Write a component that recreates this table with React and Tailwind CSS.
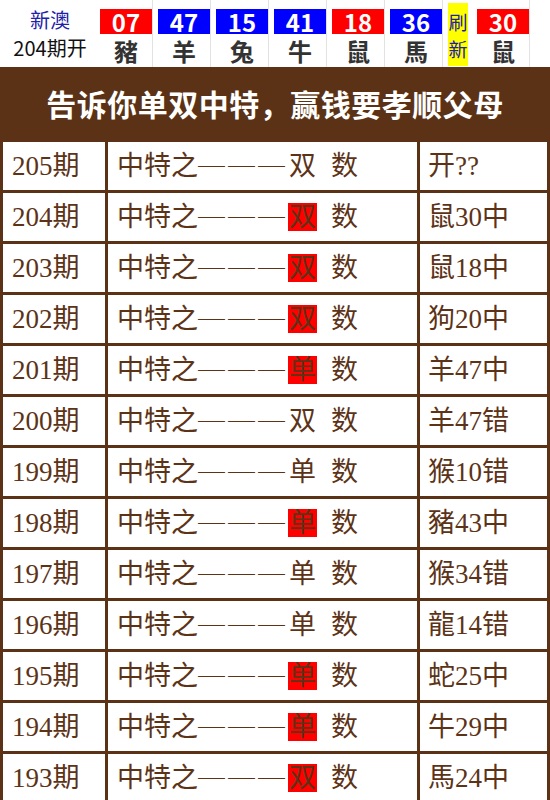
const balls = [
  { n: '07', z: '豬', c: 'bg-[#ff0000]' },
  { n: '47', z: '羊', c: 'bg-[#0000ff]' },
  { n: '15', z: '兔', c: 'bg-[#0000ff]' },
  { n: '41', z: '牛', c: 'bg-[#0000ff]' },
  { n: '18', z: '鼠', c: 'bg-[#ff0000]' },
  { n: '36', z: '馬', c: 'bg-[#0000ff]' },
];

const rows = [
  ['205期', '双', false, '开??'],
  ['204期', '双', true, '鼠30中'],
  ['203期', '双', true, '鼠18中'],
  ['202期', '双', true, '狗20中'],
  ['201期', '单', true, '羊47中'],
  ['200期', '双', false, '羊47错'],
  ['199期', '单', false, '猴10错'],
  ['198期', '单', true, '豬43中'],
  ['197期', '单', false, '猴34错'],
  ['196期', '单', false, '龍14错'],
  ['195期', '单', true, '蛇25中'],
  ['194期', '单', true, '牛29中'],
  ['193期', '双', true, '馬24中'],
];

const sans = "font-['Noto_Sans_CJK_SC',sans-serif]";
const serif = "font-['Liberation_Serif','Noto_Sans_CJK_SC',serif]";

function Ball({ n, z, c }) {
  return (
    <div className="flex h-[67px] w-[58px] flex-col">
      <div className="flex h-full w-[53px] flex-col border-r border-[#e2e2e2]">
        <div className={`mt-[9px] flex h-[25px] items-center justify-center text-[24px] font-bold leading-[25px] text-white ${c}`}>{n}</div>
        <div className="mt-[4px] text-center text-[24px] font-bold leading-[26px] text-[#333]">{z}</div>
      </div>
    </div>
  );
}

export default function App() {
  return (
    <div className={`w-[550px] bg-white ${sans}`}>
      <div className="flex h-[67px] items-stretch">
        <div className="flex w-[100px] flex-col items-center pt-[8px]">
          <span className="text-[20px] leading-[24px] text-[#2121a8]">新澳</span>
          <span className="mt-[4px] text-[20px] leading-[24px] text-[#111]">204期开</span>
        </div>
        {balls.map((b) => (
          <Ball key={b.n} {...b} />
        ))}
        <div className="w-[29px] pt-[3px]">
          <div className="flex h-[63px] w-[20px] flex-col items-center justify-center bg-[#ffff00] text-[19px] leading-[27px] text-[#2121a8]">
            <span>刷</span>
            <span>新</span>
          </div>
        </div>
        <Ball n="30" z="鼠" c="bg-[#ff0000]" />
      </div>

      <div className="bg-[#5b3216]">
        <div className="flex h-[72px] items-center justify-center text-[30px] font-bold tracking-[0.5px] text-white">
          告诉你单双中特，赢钱要孝顺父母
        </div>
        <div className={`grid grid-cols-[102px_309px_127px] gap-[3px] p-[3px] text-[27px] text-[#5c3317] ${serif}`}>
          {rows.map(([p, t, hit, r]) => (
            <div key={p} className="contents">
              <div className="flex h-[48px] items-center bg-white pl-[9px]">{p}</div>
              <div className="flex h-[48px] items-center bg-white pl-[9px]">
                <span>中特之</span>
                <span className={`tracking-[3px] ${sans}`}>───</span>
                <span className={`px-[1px] leading-[28px] ${hit ? 'bg-[#ff0000]' : ''}`}>{t}</span>
                <span className="ml-[14px]">数</span>
              </div>
              <div className="flex h-[48px] items-center bg-white pl-[8px]">{r}</div>
            </div>
          ))}
        </div>
      </div>
    </div>
  );
}
